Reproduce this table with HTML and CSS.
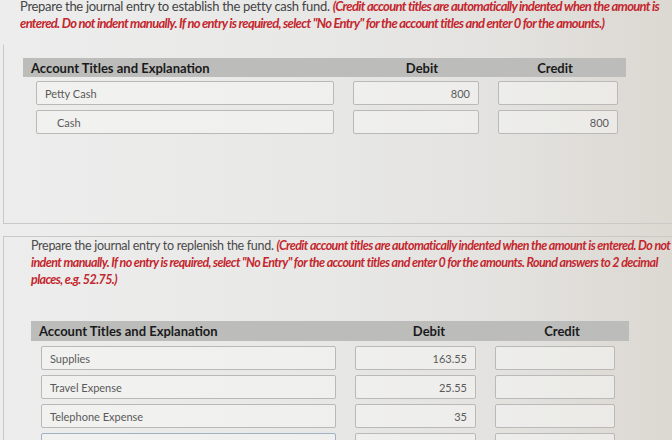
FILE: index.html
```html
<!DOCTYPE html>
<html>
<head>
<meta charset="utf-8">
<link rel="stylesheet" href="styles.css">
</head>
<body>
<div class="page">
  <p class="instr instr-top">Prepare the journal entry to establish the petty cash fund. <span class="note">(Credit account titles are automatically indented when the amount is entered. Do not indent manually. If no entry is required, select "No Entry" for the account titles and enter 0 for the amounts.)</span></p>

  <div class="panel panel-one">
    <div class="table t1">
      <div class="head">
        <div class="h-acct">Account Titles and Explanation</div>
        <div class="h-num">Debit</div>
        <div class="h-num">Credit</div>
      </div>
      <div class="row">
        <div class="box acct">Petty Cash</div>
        <div class="box num">800</div>
        <div class="box num"></div>
      </div>
      <div class="row">
        <div class="box acct indent">Cash</div>
        <div class="box num"></div>
        <div class="box num">800</div>
      </div>
    </div>
  </div>

  <div class="panel panel-two">
    <p class="instr instr-two">Prepare the journal entry to replenish the fund. <span class="note">(Credit account titles are automatically indented when the amount is entered. Do not indent manually. If no entry is required, select "No Entry" for the account titles and enter 0 for the amounts. Round answers to 2 decimal places, e.g. 52.75.)</span></p>
    <div class="table t2">
      <div class="head">
        <div class="h-acct">Account Titles and Explanation</div>
        <div class="h-num">Debit</div>
        <div class="h-num">Credit</div>
      </div>
      <div class="row">
        <div class="box acct">Supplies</div>
        <div class="box num">163.55</div>
        <div class="box num"></div>
      </div>
      <div class="row">
        <div class="box acct">Travel Expense</div>
        <div class="box num">25.55</div>
        <div class="box num"></div>
      </div>
      <div class="row">
        <div class="box acct">Telephone Expense</div>
        <div class="box num">35</div>
        <div class="box num"></div>
      </div>
      <div class="row">
        <div class="box acct focus"></div>
        <div class="box num"></div>
        <div class="box num"></div>
      </div>
    </div>
  </div>
</div>
</body>
</html>
```

FILE: styles.css
```css
html, body {
  margin: 0;
  padding: 0;
}
body {
  width: 672px;
  height: 440px;
  overflow: hidden;
  font-family: "Lato", "Open Sans", sans-serif;
  color: #3a3a3a;
  background: linear-gradient(to right, #ecedec 0%, #e8e8e7 45%, #e3e2df 75%, #dcd8d2 100%);
}
.page {
  position: relative;
  height: 440px;
  overflow: hidden;
}
.instr {
  margin: 0;
  line-height: 17px;
}
.instr-top {
  margin-top: -2px;
  padding-left: 20px;
  width: 648px;
  font-size: 13px;
  letter-spacing: -0.3px;
  color: #444;
}
.note {
  color: #c4262e;
  font-weight: 700;
  font-style: italic;
  letter-spacing: -0.6px;
}
.instr-top .note {
  letter-spacing: -0.7px;
}
.panel {
  border: 1px solid #c9c9c7;
  border-right: none;
  margin-left: 3px;
}
.panel-one {
  margin-top: 12px;
  border-top-color: transparent;
  height: 165px;
  padding-top: 13px;
}
.panel-two {
  margin-top: 12px;
  padding-top: 0;
  border-bottom: none;
}
.instr-two {
  padding-left: 27px;
  width: 640px;
  font-size: 12.5px;
  letter-spacing: -0.3px;
  color: #4a4a4a;
}
.table {
  display: flex;
  flex-direction: column;
  gap: 5px;
}
.t1 {
  margin-left: 19px;
  width: 603px;
}
.t2 {
  margin-top: 33px;
  margin-left: 27px;
  width: 598px;
}
.head {
  display: grid;
  background: #bcbcbb;
  height: 19px;
  align-items: center;
  font-weight: 700;
  font-size: 13px;
  color: #1a1a1a;
}
.t1 .head { grid-template-columns: 326px 146px 120px; margin-bottom: -1px; }
.t2 .head { grid-template-columns: 325px 146px 120px; height: 20px; }
.h-acct { padding-left: 8px; }
.h-num { text-align: center; }
.row {
  display: grid;
  column-gap: 19px;
  height: 24px;
}
.t1 .row { grid-template-columns: 298px 126px 120px; padding-left: 13px; }
.t2 .row { grid-template-columns: 295px 121px 120px; padding-left: 10px; height: 24px; }
.box {
  border: 1px solid #b9b9b8;
  border-radius: 2px;
  background: rgba(245, 245, 244, 0.55);
  font-size: 11px;
  color: #5a5a5a;
  display: flex;
  align-items: center;
  box-sizing: border-box;
}
.acct { padding-left: 8px; }
.indent { padding-left: 20px; }
.num { justify-content: flex-end; padding-right: 8px; }
.focus { border-color: #9fb2c4; }
```
